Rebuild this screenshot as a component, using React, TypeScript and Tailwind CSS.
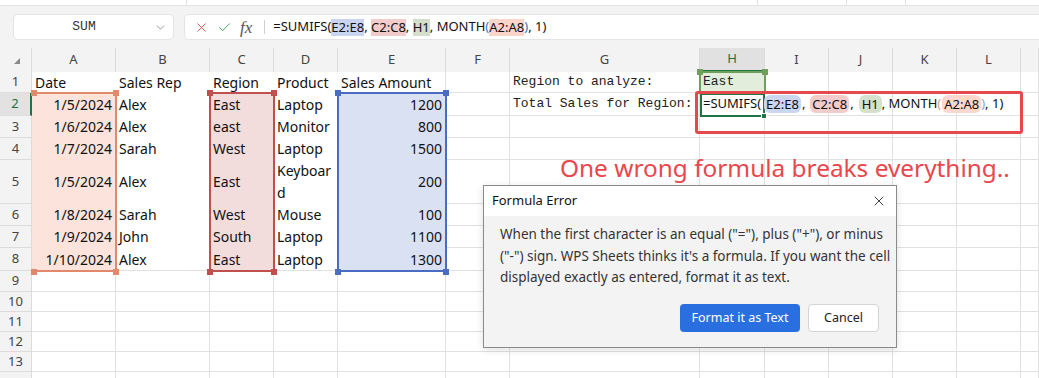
import React from 'react';
import { X, Check, ChevronDown } from 'lucide-react';

const colLabels = ['A', 'B', 'C', 'D', 'E', 'F', 'G', 'H', 'I', 'J', 'K', 'L', ''];

const rowHeights = [
  'h-[21px]', 'h-[23px]', 'h-[22px]', 'h-[22px]', 'h-[44px]', 'h-[22px]', 'h-[22px]', 'h-[23px]',
  'h-[21px]', 'h-[20px]', 'h-[20px]', 'h-[20px]', 'h-[20px]', 'h-[20px]',
];

const data: string[][] = [
  ['Date', 'Sales Rep', 'Region', 'Product', 'Sales Amount'],
  ['1/5/2024', 'Alex', 'East', 'Laptop', '1200'],
  ['1/6/2024', 'Alex', 'east', 'Monitor', '800'],
  ['1/7/2024', 'Sarah', 'West', 'Laptop', '1500'],
  ['1/5/2024', 'Alex', 'East', 'Keyboard', '200'],
  ['1/8/2024', 'Sarah', 'West', 'Mouse', '100'],
  ['1/9/2024', 'John', 'South', 'Laptop', '1100'],
  ['1/10/2024', 'Alex', 'East', 'Laptop', '1300'],
];

function cellTone(r: number, c: number): string {
  if (r >= 1 && r <= 7 && c === 0) return 'bg-[#fce4dc] border-[#fce4dc]';
  if (r >= 1 && r <= 7 && c === 2) return 'bg-[#f2dcdc] border-[#f2dcdc]';
  if (r >= 1 && r <= 7 && c === 4) return 'bg-[#dae1f3] border-[#dae1f3]';
  if (r === 0 && c === 7) return 'bg-[#e3eddb] border-[#e1e1e1]';
  if (r === 0 && c === 4) return 'bg-white border-white border-r-[#e1e1e1]';
  if (r === 7 && c <= 4) return 'bg-white border-white border-b-[#e1e1e1]';
  if (r <= 7 && c <= 4) return 'bg-white border-white';
  return 'bg-white border-[#e1e1e1]';
}

function H2Formula() {
  return (
    <span className="relative z-10 flex items-center whitespace-nowrap text-[13px] text-[#111]">
      <span>=SUMIFS(</span>
      <span className="ml-[3px] rounded-[6px] bg-[#cbd6f0] px-[2px] leading-[18px]">E2:E8</span>
      <span className="ml-[1px]">,</span>
      <span className="ml-[5px] rounded-[6px] bg-[#f2cbcb] px-[2px] leading-[18px]">C2:C8</span>
      <span className="ml-[1px]">,</span>
      <span className="ml-[5px] rounded-[6px] bg-[#d4e1cc] px-[3px] leading-[18px]">H1</span>
      <span>, MONTH</span>
      <span className="text-[#e49a86]">(</span>
      <span className="ml-[1px] rounded-[6px] bg-[#fbd7cc] px-[2px] leading-[18px]">A2:A8</span>
      <span className="text-[#8aa2d8]">)</span>
      <span>, 1)</span>
    </span>
  );
}

function CellContent({ r, c }: { r: number; c: number }) {
  if (r <= 7 && c <= 4) {
    const t = data[r][c];
    if (r === 4 && c === 3) {
      return (
        <span className="whitespace-normal leading-[22px]">
          Keyboar
          <br />d
        </span>
      );
    }
    return <span>{t}</span>;
  }
  if (c === 6 && r === 0)
    return <span className="[font-family:'Liberation_Mono',monospace] text-[13px] text-[#222]">Region to analyze:</span>;
  if (c === 6 && r === 1)
    return <span className="[font-family:'Liberation_Mono',monospace] text-[13px] text-[#222]">Total Sales for Region:</span>;
  if (c === 7 && r === 0)
    return <span className="[font-family:'Liberation_Mono',monospace] text-[13px] text-[#222]">East</span>;
  if (c === 7 && r === 1) return <H2Formula />;
  return null;
}

function Sheet() {
  const rows = rowHeights.map((h, r) => {
    const cells = [];
    const active = r === 1;
    cells.push(
      <div
        key={`rh${r}`}
        className={`${h} flex items-center justify-center border-b border-[#dcdcdc] text-[13px] ${
          active
            ? 'bg-[#e2e2e2] text-[#1e7145] border-r-2 border-r-[#217346]'
            : 'bg-[#f3f3f3] text-[#444] border-r border-r-[#dcdcdc]'
        }`}
      >
        {r < 13 ? r + 1 : ''}
      </div>
    );
    for (let c = 0; c < 13; c++) {
      const right = (c === 0 || c === 4) && r >= 1 && r <= 7;
      cells.push(
        <div
          key={`c${r}-${c}`}
          className={`${h} flex items-center overflow-visible whitespace-nowrap border-r border-b px-[3px] text-[14px] text-[#111] ${cellTone(
            r,
            c
          )} ${right ? 'justify-end' : 'justify-start'}`}
        >
          <CellContent r={r} c={c} />
        </div>
      );
    }
    return cells;
  });

  return (
    <div className="grid grid-cols-[32px_84px_94px_64px_64px_108px_64px_190px_65px_64px_64px_64px_64px_18px]">
      <div className="flex h-[24px] items-center justify-center bg-[#f3f3f3] border-r border-[#dcdcdc]">
        <svg width="8" height="8" viewBox="0 0 8 8" className="ml-[2px] mt-[2px]">
          <polygon points="7,1 7,7 1,7" fill="#8a8a8a" />
        </svg>
      </div>
      {colLabels.map((l, i) => (
        <div
          key={`ch${i}`}
          className={`flex h-[24px] items-center justify-center border-r border-[#dcdcdc] text-[13px] ${
            i === 7
              ? 'bg-[#e1e1e1] text-[#1e7145] border-b-2 border-b-[#217346]'
              : 'bg-[#f3f3f3] text-[#444]'
          }`}
        >
          {l}
        </div>
      ))}
      {rows}
    </div>
  );
}

function Corner({ cls }: { cls: string }) {
  return <div className={`absolute h-[6px] w-[6px] ${cls}`} />;
}

export default function App() {
  return (
    <div className="relative h-[378px] w-[1039px] overflow-hidden bg-[#f3f3f3] [font-family:'Noto_Sans',sans-serif]">
      {/* top strip */}
      <div className="flex h-[6px] bg-white border-b border-[#e3e3e3]">
        <div className="w-[187px] border-r border-[#e3e3e3]" />
        <div className="w-[571px] border-r border-[#e3e3e3]" />
        <div className="w-[89px] border-r border-[#e3e3e3]" />
        <div className="w-[59px] border-r border-[#e3e3e3]" />
      </div>
      {/* formula bar row */}
      <div className="mt-[8px] flex h-[26px] pl-[13px]">
        <div className="flex w-[161px] items-center rounded-[5px] border border-[#e4e4e4] bg-white">
          <span className="flex-1 text-center [font-family:'Liberation_Mono',monospace] text-[13px] text-[#333]">
            SUM
          </span>
          <ChevronDown size={13} strokeWidth={1.4} className="mr-[6px] text-[#777]" />
        </div>
        <div className="ml-[10px] -mr-[10px] flex flex-1 items-center rounded-[5px] border border-[#e4e4e4] bg-white">
          <X size={15} strokeWidth={1.5} className="ml-[9px] text-[#d9534f]" />
          <Check size={15} strokeWidth={1.5} className="ml-[8px] text-[#3f9b5f]" />
          <span className="ml-[8px] [font-family:'Liberation_Serif',serif] italic text-[17px] leading-none text-[#555]">fx</span>
          <div className="ml-[12px] h-[14px] w-px bg-[#cfcfcf]" />
          <div className="ml-[8px] flex items-center whitespace-nowrap text-[13px] text-[#111]">
            <span>=SUMIFS(</span>
            <span className="bg-[#c9d4ee] leading-[17px]">E2:E8</span>
            <span>,&nbsp;</span>
            <span className="bg-[#f1cccb] leading-[17px]">C2:C8</span>
            <span>,&nbsp;</span>
            <span className="bg-[#d3dfcb] leading-[17px]">H1</span>
            <span>, MONTH</span>
            <span className="text-[#3b6fc5]">(</span>
            <span className="bg-[#fcd5ca] leading-[17px]">A2:A8</span>
            <span className="text-[#3b6fc5]">)</span>
            <span>, 1)</span>
          </div>
        </div>
      </div>
      <div className="mt-[8px]">
        <Sheet />
      </div>

      {/* A2:A8 reference */}
      <div className="absolute left-[32px] top-[92px] h-[180px] w-[85px] border-t-2 border-r-2 border-b-2 border-[#e2896b]" />
      <Corner cls="left-[31px] top-[90px] bg-[#e2896b]" />
      <Corner cls="left-[113px] top-[90px] bg-[#e2896b]" />
      <Corner cls="left-[31px] top-[269px] bg-[#e2896b]" />
      <Corner cls="left-[113px] top-[269px] bg-[#e2896b]" />
      {/* C2:C8 reference */}
      <div className="absolute left-[209px] top-[92px] h-[180px] w-[66px] border-2 border-[#c0504d]" />
      <Corner cls="left-[207px] top-[90px] bg-[#c0504d]" />
      <Corner cls="left-[271px] top-[90px] bg-[#c0504d]" />
      <Corner cls="left-[207px] top-[269px] bg-[#c0504d]" />
      <Corner cls="left-[271px] top-[269px] bg-[#c0504d]" />
      {/* E2:E8 reference */}
      <div className="absolute left-[337px] top-[92px] h-[180px] w-[110px] border-2 border-[#4a6cc3]" />
      <Corner cls="left-[335px] top-[90px] bg-[#4a6cc3]" />
      <Corner cls="left-[443px] top-[90px] bg-[#4a6cc3]" />
      <Corner cls="left-[335px] top-[269px] bg-[#4a6cc3]" />
      <Corner cls="left-[443px] top-[269px] bg-[#4a6cc3]" />
      {/* H1 reference */}
      <div className="absolute left-[699px] top-[71px] h-[23px] w-[67px] border-2 border-[#6f9f5a]" />
      <Corner cls="left-[697px] top-[69px] bg-[#6f9f5a]" />
      <Corner cls="left-[762px] top-[69px] bg-[#6f9f5a]" />

      {/* active cell H2 */}
      <div className="absolute left-[700px] top-[93px] h-[24px] w-[65px] border-2 border-[#217346]" />
      <div className="absolute left-[761px] top-[113px] h-[6px] w-[6px] bg-[#217346] border border-white" />

      {/* red annotation */}
      <div className="absolute left-[695px] top-[91px] h-[43px] w-[328px] rounded-[3px] border-[3px] border-[#e5484d]" />
      <div className="absolute left-[560px] top-[150px] whitespace-nowrap text-[24.4px] leading-[36px] text-[#e8474e]">
        One wrong formula breaks everything..
      </div>

      {/* dialog */}
      <div className="absolute left-[483px] top-[185px] flex h-[163px] w-[414px] flex-col border border-[#8a8a8a] bg-[#f3f3f3] shadow-[0_2px_8px_rgba(0,0,0,0.12)]">
        <div className="flex h-[30px] items-center justify-between bg-white pl-[8px] pr-[9px]">
          <span className="text-[13px] text-[#111]">Formula Error</span>
          <X size={16} strokeWidth={1.3} className="text-[#222]" />
        </div>
        <div className="whitespace-nowrap pl-[16px] pt-[8px] text-[13.5px] leading-[21.5px] text-[#333]">
          When the first character is an equal ("="), plus ("+"), or minus
          <br />
          ("-") sign. WPS Sheets thinks it's a formula. If you want the cell
          <br />
          displayed exactly as entered, format it as text.
        </div>
        <div className="mt-auto mb-[15px] flex justify-end gap-[8px] pr-[17px]">
          <button className="h-[28px] w-[120px] rounded-[4px] bg-[#2a6fdf] text-[12.5px] text-white">
            Format it as Text
          </button>
          <button className="h-[28px] w-[71px] rounded-[4px] border border-[#d4d4d4] bg-white text-[12.5px] text-[#222]">
            Cancel
          </button>
        </div>
      </div>
    </div>
  );
}
